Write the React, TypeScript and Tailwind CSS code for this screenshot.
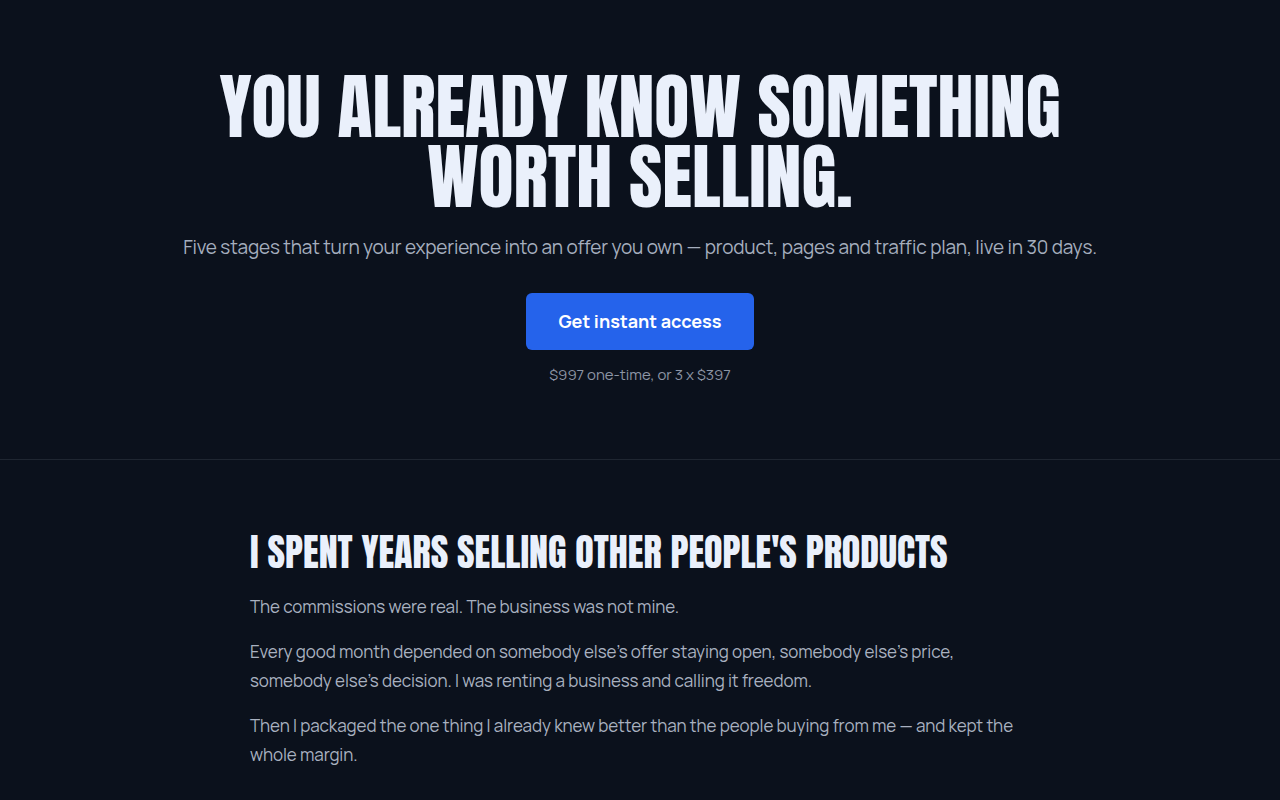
const display = "font-['Anton','Liberation_Sans_Narrow','DejaVu_Sans_Condensed',sans-serif]"
const body = "font-['Manrope','Inter','Noto_Sans',sans-serif]"

export default function App() {
  return (
    <div className={`min-h-screen bg-[#0b111c] ${body}`}>
      <section className="flex flex-col items-center border-b border-[#1f2631] pt-[72px] pb-[73px]">
        <h1 className={`${display} text-center text-[72px] leading-[70px] uppercase text-[#eaf0fb]`}>
          You already know something
          <br />
          worth selling.
        </h1>
        <p className="mt-[21px] text-[19px] leading-[28px] tracking-[-0.01em] text-[#a5aebe]">
          Five stages that turn your experience into an offer you own — product, pages and traffic plan, live in 30 days.
        </p>
        <button className="mt-[32px] h-[57px] w-[228px] rounded-md bg-[#2563eb] text-[18px] font-bold text-white">
          Get instant access
        </button>
        <p className="mt-[14px] text-[15px] leading-[22px] text-[#8d95a5]">$997 one-time, or 3 x $397</p>
      </section>

      <section className="mx-auto w-[780px] pt-[69px] pb-16">
        <h2 className={`${display} text-[38px] leading-[46px] uppercase text-[#eaf0fb]`}>
          I spent years selling other people's products
        </h2>
        <div className="mt-[17px] space-y-4 text-[17px] leading-[29px] tracking-[-0.005em] text-[#a9b1c0]">
          <p>The commissions were real. The business was not mine.</p>
          <p>
            Every good month depended on somebody else’s offer staying open, somebody else’s price, somebody else’s
            decision. I was renting a business and calling it freedom.
          </p>
          <p>
            Then I packaged the one thing I already knew better than the people buying from me — and kept the whole
            margin.
          </p>
        </div>
      </section>
    </div>
  )
}
